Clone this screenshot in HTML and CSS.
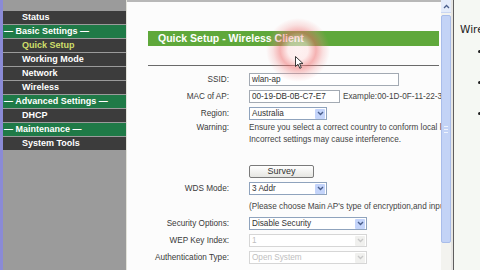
FILE: index.html
```html
<!DOCTYPE html>
<html>
<head>
<meta charset="utf-8">
<link rel="stylesheet" href="styles.css">
</head>
<body>
<div class="edge"></div>
<nav class="sidebar">
  <div class="item">Status</div>
  <div class="group">— Basic Settings —</div>
  <div class="item active">Quick Setup</div>
  <div class="item">Working Mode</div>
  <div class="item">Network</div>
  <div class="item">Wireless</div>
  <div class="group">— Advanced Settings —</div>
  <div class="item">DHCP</div>
  <div class="group">— Maintenance —</div>
  <div class="item">System Tools</div>
</nav>
<main class="main">
  <div class="title">Quick Setup - Wireless Client</div>
  <div class="rule"></div>
  <div class="form">
    <div class="row"><div class="label">SSID:</div><div class="value"><span class="input w150">wlan-ap</span></div></div>
    <div class="row"><div class="label">MAC of AP:</div><div class="value"><span class="input w91">00-19-DB-0B-C7-E7</span><span class="hint">Example:00-1D-0F-11-22-33</span></div></div>
    <div class="row"><div class="label">Region:</div><div class="value"><span class="select w78"><span class="opt">Australia</span><span class="arrow"><svg width="7" height="5" viewBox="0 0 7 5"><path d="M1 1 L3.5 3.5 L6 1" fill="none" stroke="#4a5f8c" stroke-width="1.4"/></svg></span></span></div></div>
    <div class="row warn"><div class="label">Warning:</div><div class="value text">Ensure you select a correct country to conform local law.<br>Incorrect settings may cause interference.</div></div>
    <div class="row"></div>
    <div class="row"><div class="label"></div><div class="value"><span class="button">Survey</span></div></div>
    <div class="row"><div class="label">WDS Mode:</div><div class="value"><span class="select w78"><span class="opt">3 Addr</span><span class="arrow"><svg width="7" height="5" viewBox="0 0 7 5"><path d="M1 1 L3.5 3.5 L6 1" fill="none" stroke="#4a5f8c" stroke-width="1.4"/></svg></span></span></div></div>
    <div class="row tall"><div class="label"></div><div class="value text">(Please choose Main AP's type of encryption,and input the key.)</div></div>
    <div class="row"><div class="label">Security Options:</div><div class="value"><span class="select w118"><span class="opt">Disable Security</span><span class="arrow"><svg width="7" height="5" viewBox="0 0 7 5"><path d="M1 1 L3.5 3.5 L6 1" fill="none" stroke="#4a5f8c" stroke-width="1.4"/></svg></span></span></div></div>
    <div class="row"><div class="label">WEP Key Index:</div><div class="value"><span class="select w118 disabled"><span class="opt">1</span><span class="arrow"><svg width="7" height="5" viewBox="0 0 7 5"><path d="M1 1 L3.5 3.5 L6 1" fill="none" stroke="#c8c8c8" stroke-width="1.4"/></svg></span></span></div></div>
    <div class="row"><div class="label">Authentication Type:</div><div class="value"><span class="select w118 disabled"><span class="opt">Open System</span><span class="arrow"><svg width="7" height="5" viewBox="0 0 7 5"><path d="M1 1 L3.5 3.5 L6 1" fill="none" stroke="#c8c8c8" stroke-width="1.4"/></svg></span></span></div></div>
  </div>
  <div class="glow"></div>
  <svg class="cursor" width="9" height="13" viewBox="0 0 9 13"><path d="M0.5 0.5 L0.5 10.5 L3 8.2 L4.8 12.3 L6.3 11.6 L4.6 7.6 L8 7.6 Z" fill="#fff" stroke="#222" stroke-width="0.9"/></svg>
</main>
<div class="scroll">
  <div class="up"><svg width="7" height="5" viewBox="0 0 7 5"><path d="M1 4 L3.5 1.5 L6 4" fill="none" stroke="#4a5f8c" stroke-width="1.3"/></svg></div>
  <div class="thumb"><span class="grip"></span><span class="grip"></span><span class="grip"></span></div>
  <div class="track"></div>
</div>
<div class="gap"></div>
<div class="vline"></div>
<aside class="help">
  <div class="help-title">Wireless</div>
  <ul class="dots"><li></li><li></li><li></li></ul>
</aside>
</body>
</html>
```
FILE: styles.css
```css
html, body {
  margin: 0;
  padding: 0;
}
body {
  width: 480px;
  height: 270px;
  overflow: hidden;
  display: flex;
  font-family: "Liberation Sans", Arial, sans-serif;
  background: #fff;
}
.edge {
  width: 3px;
  flex: none;
  background: #8a8ad6;
}
.sidebar {
  width: 123px;
  flex: none;
  background: #9b9b9b;
  padding-top: 11px;
  border-right: 1px solid #e2e2da;
  box-sizing: content-box;
}
.item, .group {
  height: 13px;
  line-height: 13px;
  margin-bottom: 1px;
  font-size: 9px;
  font-weight: bold;
  color: #fff;
  white-space: nowrap;
}
.item {
  background: #3c3c3c;
  padding-left: 19px;
}
.item.active {
  color: #cfdf6a;
}
.group {
  background: #1f7a47;
  padding-left: 1px;
}
.main {
  width: 314px;
  flex: none;
  position: relative;
  overflow: hidden;
  background: #fcfcfc;
  border-top: 2px solid #b8b8b8;
  padding: 29px 2px 0 21px;
  box-sizing: border-box;
}
.title {
  height: 15px;
  line-height: 15px;
  background: #5fa83b;
  color: #fff;
  font-size: 10.5px;
  font-weight: bold;
  padding-left: 10px;
  white-space: nowrap;
}
.rule {
  margin-top: 19px;
  height: 1px;
  background: #6a6a6a;
}
.form {
  margin-top: 5px;
}
.row {
  display: flex;
  align-items: center;
  height: 17px;
  font-size: 8.2px;
  color: #3a3a3a;
  white-space: nowrap;
}
.row.tall {
  height: 18px;
}
.row.warn {
  align-items: flex-start;
  height: 24px;
  line-height: 12px;
}
.label {
  width: 81px;
  flex: none;
  text-align: right;
  margin-right: 20px;
}
.value {
  display: flex;
  align-items: center;
}
.value.text {
  display: block;
  color: #444;
}
.input, .select {
  height: 13px;
  box-sizing: border-box;
  border: 1px solid #a3aab3;
  background: #fff;
  line-height: 11px;
  padding: 0 2px;
  color: #333;
  display: flex;
  align-items: center;
}
.w150 { width: 150px; }
.w91 { width: 91px; }
.w78 { width: 78px; }
.w118 { width: 118px; }
.hint {
  margin-left: 3px;
  color: #444;
}
.select {
  border-color: #8fa3bd;
  padding-right: 1px;
  justify-content: space-between;
}
.arrow {
  width: 10px;
  height: 10px;
  background: #c4d4fa;
  border-radius: 1px;
  display: flex;
  align-items: center;
  justify-content: center;
}
.select.disabled {
  border-color: #d6d6d6;
  color: #c0c0c0;
}
.select.disabled .arrow {
  background: #f0f0ee;
}
.button {
  width: 65px;
  height: 13px;
  box-sizing: border-box;
  border: 1px solid #7a7a7a;
  border-radius: 2px;
  background: linear-gradient(#ffffff, #e6e6e2);
  font-size: 9px;
  line-height: 11px;
  text-align: center;
  color: #333;
}
.glow {
  position: absolute;
  left: 139px;
  top: 16px;
  width: 64px;
  height: 64px;
  border-radius: 50%;
  background: radial-gradient(circle, rgba(255,235,235,0.6) 0, rgba(255,225,225,0.55) 10px, rgba(238,105,105,0.5) 18px, rgba(240,140,140,0.25) 25px, rgba(255,200,200,0) 32px);
}
.cursor {
  position: absolute;
  left: 168px;
  top: 54px;
}
.scroll {
  width: 10px;
  flex: none;
  background: #f3f3ef;
  display: flex;
  flex-direction: column;
}
.up {
  height: 12px;
  background: #e4ecfb;
  border-bottom: 1px solid #c9d6f2;
  display: flex;
  align-items: center;
  justify-content: center;
}
.thumb {
  margin-top: 2px;
  height: 226px;
  background: #c3d3f6;
  border: 1px solid #a9bdea;
  border-radius: 2px;
  display: flex;
  flex-direction: column;
  align-items: center;
  justify-content: center;
  gap: 2px;
}
.grip {
  width: 4px;
  height: 1px;
  background: #eef3fd;
}
.track {
  flex: 1;
}
.gap {
  width: 2px;
  flex: none;
  background: #e6e6e2;
}
.vline {
  width: 1px;
  flex: none;
  background: #5e5e5e;
}
.help {
  flex: 1;
  background: #f5f8f3;
  padding: 23px 0 0 6px;
  overflow: hidden;
  white-space: nowrap;
}
.help-title {
  font-family: "DejaVu Sans", "Liberation Sans", sans-serif;
  font-size: 10.5px;
  line-height: 13px;
  color: #222;
}
.dots {
  list-style: none;
  margin: 14px 0 0 18px;
  padding: 0;
  display: flex;
  flex-direction: column;
  gap: 28px;
}
.dots li {
  width: 3px;
  height: 3px;
  border-radius: 50%;
  background: #222;
}
```
